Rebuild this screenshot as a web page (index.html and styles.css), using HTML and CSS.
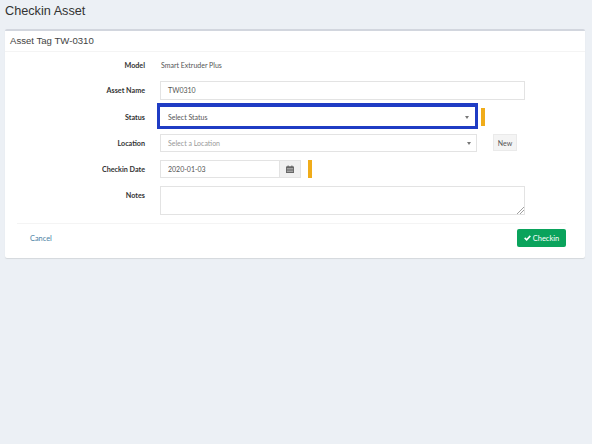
FILE: index.html
```html
<!DOCTYPE html>
<html lang="en">

<head>
    <meta charset="UTF-8">
    <meta name="viewport" content="width=device-width, initial-scale=1.0">
    <title>Checkin Asset</title>
    <link rel="stylesheet" href="styles.css">
</head>

<body>
    <h1 class="page-title">Checkin Asset</h1>

    <div class="box">
        <div class="box-header">Asset Tag TW-0310</div>

        <form class="box-body">
            <div class="row row-model">
                <label class="row-label">Model</label>
                <div class="static-text">Smart Extruder Plus</div>
            </div>

            <div class="row row-name">
                <label class="row-label">Asset Name</label>
                <div class="input input-full">TW0310</div>
            </div>

            <div class="row row-status">
                <label class="row-label">Status</label>
                <div class="highlight">
                    <div class="input select">Select Status<span class="caret"></span></div>
                </div>
                <span class="marker marker-status"></span>
            </div>

            <div class="row row-location">
                <label class="row-label">Location</label>
                <div class="input select select-location placeholder">Select a Location<span class="caret"></span></div>
                <button type="button" class="btn-new">New</button>
            </div>

            <div class="row row-date">
                <label class="row-label">Checkin Date</label>
                <div class="date-group">
                    <div class="input input-date">2020-01-03</div>
                    <span class="addon">
                        <svg width="8" height="8" viewBox="0 0 9 9">
                            <path fill="#666" d="M0 2.6C0 1.9.4 1.5 1 1.5h.8V.5h1.2v1h3v-1h1.2v1H8c.6 0 1 .4 1 1.1V9H0z"/>
                            <path fill="#ddd" d="M1 3.8h7v.6H1zM1 5.4h7V6H1zM1 7h7v.6H1z"/>
                        </svg>
                    </span>
                </div>
                <span class="marker marker-date"></span>
            </div>

            <div class="row row-notes">
                <label class="row-label">Notes</label>
                <div class="input input-full textarea">
                    <svg class="grip" width="7" height="7" viewBox="0 0 7 7">
                        <path stroke="#888" stroke-width=".8" d="M7 0L0 7M7 3L3 7"/>
                    </svg>
                </div>
            </div>

            <div class="box-footer">
                <a class="cancel" href="#">Cancel</a>
                <button type="button" class="btn-checkin">
                    <svg width="7" height="6" viewBox="0 0 8 7">
                        <path fill="none" stroke="#fff" stroke-width="1.8" d="M.7 3.4l2.3 2.3L7.3 1"/>
                    </svg>
                    Checkin
                </button>
            </div>
        </form>
    </div>
</body>

</html>
```

FILE: styles.css
```css
body {
    margin: 0;
    height: 444px;
    overflow: hidden;
    padding: 0 7px 0 5px;
    box-sizing: border-box;
    background: #ecf0f5;
    font-family: Lato, "Open Sans", sans-serif;
    font-size: 7px;
    color: #444;
}

.page-title {
    margin: 0;
    height: 29px;
    padding-top: 3px;
    box-sizing: border-box;
    font-family: "Liberation Sans", sans-serif;
    font-size: 12.7px;
    font-weight: 400;
    line-height: 16px;
    color: #333;
}

/* card */
.box {
    height: 229px;
    box-sizing: border-box;
    background: #fff;
    border-top: 2px solid #d2d6de;
    border-radius: 2px;
    box-shadow: 0 1px 1px rgba(0, 0, 0, 0.1);
}

.box-header {
    height: 20px;
    padding-left: 5px;
    font-family: "Liberation Sans", sans-serif;
    font-size: 9.6px;
    line-height: 19px;
    color: #444;
    border-bottom: 1px solid #f4f4f4;
}

.box-body {
    display: flex;
    flex-direction: column;
}

/* form rows */
.row {
    display: flex;
    align-items: flex-start;
}

.row-label {
    flex: none;
    width: 140px;
    margin-right: 15px;
    text-align: right;
    font-size: 7.2px;
    font-weight: 700;
    color: #333;
    line-height: 14px;
}

.row-model {
    margin-top: 6px;
    height: 23px;
    padding-top: 1px;
    box-sizing: border-box;
}

.static-text {
    line-height: 12px;
    margin-left: 1px;
    color: #555;
}

.row-name {
    height: 22px;
}

.row-status {
    height: 31px;
}

.row-location {
    height: 26px;
}

.row-date {
    height: 26px;
}

.row-notes {
    height: 37px;
}

.row-name .row-label,
.row-location .row-label,
.row-date .row-label {
    padding-top: 3px;
}

.row-status .row-label {
    padding-top: 8px;
}

.row-notes .row-label {
    padding-top: 3px;
}

/* inputs */
.input {
    box-sizing: border-box;
    height: 19px;
    padding-left: 7px;
    background: #fff;
    border: 1px solid #e3e3e3;
    font-size: 7px;
    line-height: 17px;
    color: #555;
    position: relative;
}

.input-full {
    width: 365px;
}

.textarea {
    height: 29px;
}

.grip {
    position: absolute;
    right: 0;
    bottom: 0;
}

.select {
    width: 315px;
}

.select-location {
    width: 317px;
    height: 18px;
    line-height: 16px;
}

.placeholder {
    color: #999;
}

.caret {
    position: absolute;
    right: 5px;
    top: 7px;
    width: 0;
    height: 0;
    border-left: 2.5px solid transparent;
    border-right: 2.5px solid transparent;
    border-top: 3px solid #777;
}

/* blue box drawn over the status field */
.highlight {
    box-sizing: border-box;
    width: 321px;
    height: 26px;
    margin-left: -3px;
    border: 3px solid #1f3cc4;
    border-top-width: 4px;
}

.highlight .input {
    height: 19px;
    border: 0;
    line-height: 20px;
    padding-left: 8px;
}

.highlight .caret {
    right: 6px;
    top: 9px;
}

.marker {
    display: block;
    flex: none;
    width: 4px;
    background: #f0ac1a;
}

.marker-status {
    height: 18px;
    margin: 5px 0 0 3px;
}

.marker-date {
    height: 18px;
    margin-left: 7px;
}

.btn-new {
    width: 24px;
    height: 17px;
    margin-left: 16px;
    padding: 0;
    background: #f4f4f4;
    border: 1px solid #eaeaea;
    font-family: inherit;
    font-size: 7px;
    color: #555;
}

.date-group {
    display: flex;
    width: 141px;
}

.input-date {
    flex: 1;
    height: 18px;
    line-height: 16px;
}

.addon {
    width: 21px;
    height: 18px;
    box-sizing: border-box;
    display: flex;
    align-items: center;
    justify-content: center;
    background: #f0f0f0;
    border: 1px solid #e3e3e3;
    border-left: 0;
}

/* footer */
.box-footer {
    display: flex;
    justify-content: space-between;
    align-items: flex-start;
    height: 24px;
    margin: 0 19px 0 12px;
    padding: 5px 0 0 13px;
    border-top: 1px solid #f4f4f4;
}

.cancel {
    margin-top: 5px;
    color: #4a80a3;
    text-decoration: none;
    font-size: 7.4px;
}

.btn-checkin {
    width: 49px;
    height: 18px;
    padding: 0;
    display: flex;
    align-items: center;
    justify-content: center;
    gap: 2px;
    background: #0aa35c;
    border: 0;
    border-radius: 2px;
    font-family: inherit;
    font-size: 7.5px;
    color: #fff;
}
```
